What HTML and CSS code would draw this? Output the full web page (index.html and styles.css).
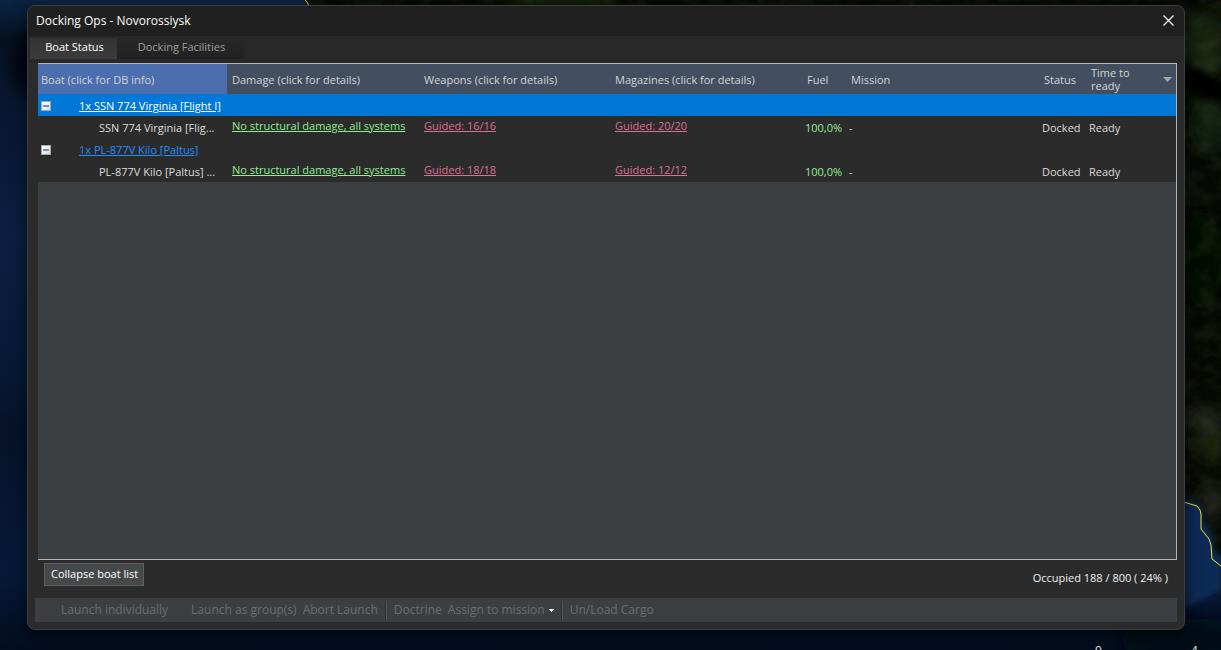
FILE: index.html
```html
<!DOCTYPE html>
<html lang="en">
<head>
<meta charset="utf-8">
<title>Docking Ops - Novorossiysk</title>
<link rel="stylesheet" href="styles.css">
</head>
<body>
<svg class="map" viewBox="0 0 1221 650" preserveAspectRatio="none" aria-hidden="true">
  <defs>
    <linearGradient id="sea" x1="0" y1="0" x2="0" y2="1">
      <stop offset="0" stop-color="#0b2344"/>
      <stop offset=".06" stop-color="#06111f"/>
      <stop offset=".13" stop-color="#08152c"/>
      <stop offset=".36" stop-color="#0b1f42"/>
      <stop offset=".55" stop-color="#081a36"/>
      <stop offset=".66" stop-color="#061329"/>
      <stop offset=".88" stop-color="#071938"/>
      <stop offset="1" stop-color="#030d1f"/>
    </linearGradient>
    <filter id="soft" x="-50%" y="-50%" width="200%" height="200%"><feGaussianBlur stdDeviation="8"/></filter>
    <filter id="fine" x="-50%" y="-50%" width="200%" height="200%"><feGaussianBlur stdDeviation="3"/></filter>
    <filter id="relief" x="0" y="0" width="100%" height="100%">
      <feTurbulence type="fractalNoise" baseFrequency=".05 .07" numOctaves="3" seed="4"/>
      <feColorMatrix values="0 0 0 0 .14  0 0 0 0 .17  0 0 0 0 .08  2.600 0 0 0 -1"/>
      <feComposite in2="SourceGraphic" operator="in"/>
    </filter>
  </defs>
  <rect width="1221" height="650" fill="url(#sea)"/>
  <path d="M304 0l5 6v30h870v466l12 2 7 3 3 8v14l9 11 3 13 1 8 7 6V0z" fill="#050903"/>
  <g filter="url(#soft)">
    <ellipse cx="30" cy="65" rx="14" ry="30" fill="#010409"/>
    <ellipse cx="560" cy="0" rx="60" ry="6" fill="#1e3010"/>
    <ellipse cx="1205" cy="45" rx="24" ry="34" fill="#182209"/>
    <ellipse cx="1210" cy="125" rx="22" ry="30" fill="#111a08"/>
    <ellipse cx="1203" cy="260" rx="20" ry="50" fill="#030704"/>
    <ellipse cx="1205" cy="420" rx="20" ry="12" fill="#22231a"/>
    <ellipse cx="1212" cy="445" rx="18" ry="14" fill="#1a2409"/>
    <ellipse cx="1213" cy="500" rx="14" ry="14" fill="#22241e"/>
  </g>
  <path d="M304 0l5 6v30h870v466l12 2 7 3 3 8v14l9 11 3 13 1 8 7 6V0z" fill="#fff" filter="url(#relief)" opacity=".12"/>
  <path d="M1180 66l20 4 24 14v20l-20-8-24-14z" fill="#020503" filter="url(#fine)"/>
  <path d="M1184 498l10 4 8 5v14l9 12 3 17 8 6v34l-38 18z" fill="#102b55" filter="url(#fine)"/>
  <ellipse cx="1190" cy="640" rx="70" ry="22" fill="#020814" filter="url(#soft)"/>
  <g fill="none" stroke="#d8d334">
    <path d="M305 0l2 2 2 4"/>
    <path d="M1184 502l3 1 10 3 3 4 1 4v15l8 10 2 6 1 14 9 7" stroke="#eee83b"/>
  </g>
  <g class="map-scale">
    <text x="1095" y="655">0</text>
    <text x="1191" y="655">4</text>
  </g>
</svg>
<main class="window">
  <header class="titlebar">
    <h1 class="title">Docking Ops - Novorossiysk</h1>
    <button class="close" type="button" aria-label="Close">
      <svg width="11" height="11" viewBox="0 0 11 11"><path d="M.5.5l10 10M10.500.5l-10 10" stroke="#fff" stroke-width="1.2"/></svg>
    </button>
  </header>
  <div class="tabs" role="tablist">
    <button class="tab tab-active" type="button" role="tab" aria-selected="true">Boat Status</button>
    <button class="tab tab-idle" type="button" role="tab" aria-selected="false">Docking Facilities</button>
  </div>
  <section class="grid">
    <table class="boats">
      <colgroup>
        <col class="c-boat"><col class="c-damage"><col class="c-weapons"><col class="c-magazines"><col class="c-fuel"><col><col class="c-status"><col class="c-ready">
      </colgroup>
      <thead>
        <tr>
          <th class="sorted">Boat (click for DB info)</th>
          <th>Damage (click for details)</th>
          <th>Weapons (click for details)</th>
          <th>Magazines (click for details)</th>
          <th>Fuel</th>
          <th>Mission</th>
          <th>Status</th>
          <th class="ready-cell"><span class="ready-head"><span class="ready-label">Time to ready</span><svg width="9" height="5" viewBox="0 0 9 5"><path d="M0 0h9L4.500 5z" fill="#a6a8a6"/></svg></span></th>
        </tr>
      </thead>
      <tbody>
        <tr class="group selected">
          <td colspan="8"><span class="group-line"><button class="toggle" type="button" aria-label="Collapse group" aria-expanded="true"></button><a href="#virginia">1x SSN 774 Virginia [Flight I]</a></span></td>
        </tr>
        <tr class="boat">
          <td class="name">SSN 774 Virginia [Flig...</td>
          <td class="damage"><a href="#damage1">No structural damage, all systems</a></td>
          <td class="stores"><a href="#weapons1">Guided: 16/16</a></td>
          <td class="stores"><a href="#magazines1">Guided: 20/20</a></td>
          <td class="fuel">100,0%</td>
          <td>-</td>
          <td>Docked</td>
          <td>Ready</td>
        </tr>
        <tr class="group">
          <td colspan="8"><span class="group-line"><button class="toggle" type="button" aria-label="Collapse group" aria-expanded="true"></button><a href="#kilo">1x PL-877V Kilo [Paltus]</a></span></td>
        </tr>
        <tr class="boat">
          <td class="name">PL-877V Kilo [Paltus] ...</td>
          <td class="damage"><a href="#damage2">No structural damage, all systems</a></td>
          <td class="stores"><a href="#weapons2">Guided: 18/18</a></td>
          <td class="stores"><a href="#magazines2">Guided: 12/12</a></td>
          <td class="fuel">100,0%</td>
          <td>-</td>
          <td>Docked</td>
          <td>Ready</td>
        </tr>
      </tbody>
    </table>
  </section>
  <div class="summary">
    <button class="collapse" type="button">Collapse boat list</button>
    <span class="occupied">Occupied 188 / 800 ( 24% )</span>
  </div>
  <div class="toolbar" role="toolbar">
    <button class="tool tool-wide" type="button" disabled>Launch individually</button>
    <button class="tool" type="button" disabled>Launch as group(s)</button>
    <button class="tool" type="button" disabled>Abort Launch</button>
    <span class="divider"></span>
    <button class="tool" type="button" disabled>Doctrine</button>
    <button class="tool tool-menu" type="button" aria-haspopup="true" disabled>Assign to mission<svg width="5" height="3" viewBox="0 0 5 3"><path d="M0 0h5v1H4v1H3v1H2V2H1V1H0z" fill="#fff"/></svg></button>
    <span class="divider"></span>
    <button class="tool" type="button" disabled>Un/Load Cargo</button>
  </div>
</main>
</body>
</html>
```
FILE: styles.css
```css
* {
  box-sizing: border-box;
}

body {
  margin: 0;
  height: 100vh;
  padding: 5px 36px 20px 27px;
  overflow: hidden;
  background: #050d1c;
  color: #dcdcdc;
  font: 11px/16px "Open Sans", "Noto Sans", sans-serif;
}

button {
  margin: 0;
  border: 0;
  padding: 0;
  background: none;
  color: inherit;
  font: inherit;
}

svg {
  flex: none;
}

.map {
  position: absolute;
  inset: 0;
  width: 100%;
  height: 100%;
}

.map-scale {
  fill: #e8e8e8;
  font-size: 12px;
}

.window {
  position: relative;
  display: flex;
  flex-direction: column;
  height: 100%;
  border: 1px solid #3c3f40;
  border-radius: 8px;
  overflow: hidden;
  background: #2b2b2b;
  box-shadow: 0 6px 16px rgba(0, 0, 0, .6);
}

.titlebar {
  display: flex;
  flex: none;
  align-items: center;
  justify-content: space-between;
  height: 30px;
  padding: 0 10px 1px 8px;
  background: #202020;
}

.title {
  margin: 0;
  color: #fff;
  font-size: 12px;
  font-weight: 400;
}

.close {
  display: flex;
}

.tabs {
  display: flex;
  flex: none;
  height: 27px;
  padding: 2px 2px 4px;
  background: #282828;
}

.tab {
  padding: 0 0 3px 2px;
  white-space: nowrap;
}

.tab-active {
  width: 87px;
  background: linear-gradient(#333, #3c3c3c);
  color: #fff;
}

.tab-idle {
  width: 127px;
  background: linear-gradient(#282828, #212121);
  color: #a0a0a0;
}

.grid {
  flex: 1;
  min-height: 0;
  margin: 0 7px 0 10px;
  border: solid #b4b7b8;
  border-width: 1px 1px 1px 0;
  background: #3c3f41;
  white-space: nowrap;
}

.boats {
  width: 100%;
  border-collapse: collapse;
  table-layout: fixed;
}

.c-boat {
  width: 189px;
}

.c-damage,
.c-magazines {
  width: 192px;
}

.c-weapons {
  width: 191px;
}

.c-fuel {
  width: 44px;
}

.c-status {
  width: 47px;
}

.c-ready {
  width: 90px;
}

th {
  height: 30px;
  padding: 1px 0 0 5px;
  background: #434e60;
  color: #d4d4d4;
  font-weight: 400;
  text-align: left;
}

.sorted {
  padding-left: 3px;
  background: #4b6eaf;
}

.ready-cell {
  padding-top: 0;
}

.ready-head {
  display: flex;
  align-items: center;
  justify-content: space-between;
  padding-right: 4px;
  line-height: 13px;
}

.ready-label {
  width: 48px;
  white-space: normal;
}

td {
  height: 22px;
  padding: 2px 0 0 3px;
  background: #2b2b2b;
}

.name {
  padding-left: 61px;
}

.damage,
.stores {
  padding: 0 0 2px 5px;
}

.damage a,
.fuel {
  color: #90ee90;
}

.stores a {
  color: #db7093;
}

.group-line {
  display: flex;
  align-items: center;
  gap: 28px;
}

.group a {
  color: #1e90ff;
}

.selected td {
  background: #0078d7;
}

.selected a {
  color: #fff;
}

.toggle {
  width: 10px;
  height: 10px;
  border: 1px solid #a8a8a8;
  background: linear-gradient(#7a8cc0, #7a8cc0) center / 6px 2px no-repeat, linear-gradient(135deg, #fff, #dedede);
}

.summary {
  display: flex;
  flex: none;
  align-items: flex-start;
  justify-content: space-between;
  height: 38px;
  padding: 3px 16px 0;
}

.collapse {
  height: 23px;
  border: 1px solid #5e6060;
  padding: 0 5px 1px 6px;
  background: #45494a;
  color: #fff;
}

.occupied {
  padding-top: 7px;
  color: #f0f0f0;
}

.toolbar {
  display: flex;
  flex: none;
  align-items: center;
  height: 24px;
  margin: 0 7px 7px;
  padding-left: 23px;
  background: #3c3f41;
  color: #6d6d6d;
  font-size: 12px;
}

.tool {
  padding: 0 3px;
  white-space: nowrap;
}

.tool-wide {
  margin-right: 17px;
}

.tool-menu {
  display: flex;
  align-items: center;
  gap: 4px;
}

.divider {
  width: 2px;
  height: 18px;
  margin: 0 4px;
  border-left: 1px solid #2d2f30;
  background: #55585a;
}
```
